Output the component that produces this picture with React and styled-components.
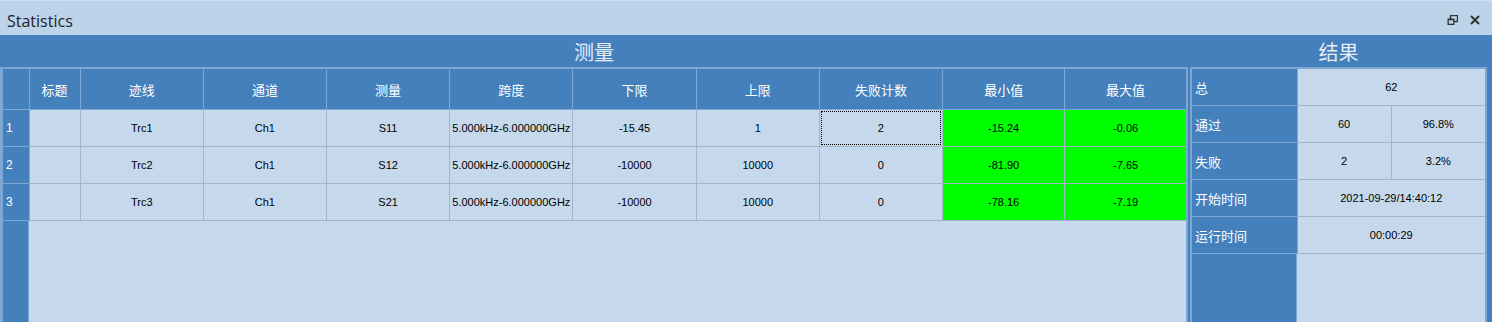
import React from "react";
import styled, { createGlobalStyle } from "styled-components";

const GlobalStyle = createGlobalStyle`
  html, body {
    margin: 0;
    padding: 0;
    overflow: hidden;
    background: #4380bc;
  }
`;

const BLUE = "#4380bc";
const LIGHT = "#c6d9ec";
const GRID = "#a2b6ca";
const EDGE = "#7ea7d3";
const CJK = `"Noto Sans CJK SC", "Liberation Sans", sans-serif`;

const Window = styled.div`
  width: 1492px;
  height: 322px;
  display: flex;
  flex-direction: column;
  font-family: "Liberation Sans", Arial, sans-serif;
`;

const TitleBar = styled.div`
  height: 34px;
  flex: none;
  background: #bdd3ea;
  border-top: 1px solid #cfdff0;
  display: flex;
  align-items: center;
  padding: 0 12px 0 7px;
`;

const Title = styled.div`
  flex: 1;
  font-family: "Open Sans", "Noto Sans", sans-serif;
  font-size: 16px;
  color: #222;
  margin-top: 5px;
`;

const TitleButtons = styled.div`
  display: flex;
  gap: 12px;
  align-items: center;
  margin-top: 4px;
`;

const Body = styled.div`
  flex: 1;
  min-height: 0;
  display: grid;
  grid-template-columns: 1188px 297px;
  column-gap: 2px;
  padding-right: 5px;
  background: ${BLUE};
`;

const Section = styled.div`
  display: flex;
  flex-direction: column;
  min-height: 0;
`;

const SectionTitle = styled.div`
  height: 31px;
  flex: none;
  display: flex;
  align-items: center;
  justify-content: center;
  font-family: ${CJK};
  font-size: 20px;
  color: #e3ecf7;
  padding-top: 1px;
`;

const Panel = styled.div`
  flex: 1;
  min-height: 0;
  display: flex;
  flex-direction: column;
  border-top: 2px solid ${EDGE};
  border-left: ${(p) => p.$left}px solid ${EDGE};
  border-right: 2px solid ${EDGE};
  background: ${LIGHT};
  overflow: hidden;
`;

const Table = styled.table`
  border-collapse: collapse;
  table-layout: fixed;
  width: 100%;
  flex: none;
`;

const HeadCell = styled.th`
  height: 40px;
  padding: 0;
  background: ${BLUE};
  color: #fff;
  font-family: ${CJK};
  font-size: 13px;
  font-weight: normal;
  text-align: center;
  border-right: 1px solid ${EDGE};
  border-bottom: 1px solid ${EDGE};
  &:last-child {
    border-right: none;
  }
`;

const RowNum = styled.td`
  padding: 0 0 0 3px;
  background: ${BLUE};
  color: #fff;
  font-size: 12px;
  text-align: left;
  border-right: 1px solid ${EDGE};
  border-bottom: 1px solid ${EDGE};
`;

const Cell = styled.td`
  height: 36px;
  padding: 0;
  background: ${(p) => (p.$ok ? "#00ff00" : LIGHT)};
  color: #000;
  font-size: 11px;
  text-align: center;
  border-right: 1px solid ${GRID};
  border-bottom: 1px solid ${GRID};
  &:last-child {
    border-right: none;
  }
`;

const Focus = styled.div`
  height: 34px;
  margin: 0 1px;
  border: 1px dotted #000;
  box-sizing: border-box;
  display: flex;
  align-items: center;
  justify-content: center;
`;

const Label = styled.td`
  height: 36px;
  padding: 0 0 0 3px;
  background: ${BLUE};
  color: #fff;
  font-family: ${CJK};
  font-size: 13px;
  border-right: 1px solid ${EDGE};
  border-bottom: 1px solid ${EDGE};
`;

const Rest = styled.div`
  flex: 1;
  display: flex;
`;

const RestHeader = styled.div`
  width: ${(p) => p.$w}px;
  flex: none;
  background: ${BLUE};
  border-right: 1px solid ${EDGE};
`;

const headers = ["标题", "迹线", "通道", "测量", "跨度", "下限", "上限", "失败计数", "最小值", "最大值"];
const widths = [26, 51, 123, 123, 123, 123, 123, 123, 123, 122, 121];

const rows = [
  ["", "Trc1", "Ch1", "S11", "5.000kHz-6.000000GHz", "-15.45", "1", "2", "-15.24", "-0.06"],
  ["", "Trc2", "Ch1", "S12", "5.000kHz-6.000000GHz", "-10000", "10000", "0", "-81.90", "-7.65"],
  ["", "Trc3", "Ch1", "S21", "5.000kHz-6.000000GHz", "-10000", "10000", "0", "-78.16", "-7.19"],
];

const RestoreIcon = () => (
  <svg width="11" height="11" viewBox="0 0 11 11">
    <rect x="3.5" y="0.5" width="7" height="6" fill="none" stroke="#333" strokeWidth="1.4" />
    <rect x="0.5" y="3.5" width="7" height="6.5" fill="#333" />
    <rect x="1.8" y="5.3" width="4.4" height="3.4" fill="#bdd3ea" />
  </svg>
);

const CloseIcon = () => (
  <svg width="10" height="10" viewBox="0 0 10 10">
    <path d="M1 1 L9 9 M9 1 L1 9" stroke="#333" strokeWidth="2" />
  </svg>
);

const Measurements = () => (
  <Panel $left={3}>
    <Table>
      <colgroup>
        {widths.map((w, i) => (
          <col key={i} style={{ width: w }} />
        ))}
      </colgroup>
      <thead>
        <tr>
          <HeadCell />
          {headers.map((h) => (
            <HeadCell key={h}>{h}</HeadCell>
          ))}
        </tr>
      </thead>
      <tbody>
        {rows.map((r, i) => (
          <tr key={i}>
            <RowNum>{i + 1}</RowNum>
            {r.map((v, j) => (
              <Cell key={j} $ok={j >= 8}>
                {i === 0 && j === 7 ? <Focus>{v}</Focus> : v}
              </Cell>
            ))}
          </tr>
        ))}
      </tbody>
    </Table>
    <Rest>
      <RestHeader $w={25} />
    </Rest>
  </Panel>
);

const Results = () => (
  <Panel $left={2}>
    <Table>
      <colgroup>
        <col style={{ width: 105 }} />
        <col style={{ width: 94 }} />
        <col />
      </colgroup>
      <tbody>
        <tr>
          <Label>总</Label>
          <Cell colSpan={2}>62</Cell>
        </tr>
        <tr>
          <Label>通过</Label>
          <Cell>60</Cell>
          <Cell>96.8%</Cell>
        </tr>
        <tr>
          <Label>失败</Label>
          <Cell>2</Cell>
          <Cell>3.2%</Cell>
        </tr>
        <tr>
          <Label>开始时间</Label>
          <Cell colSpan={2}>2021-09-29/14:40:12</Cell>
        </tr>
        <tr>
          <Label>运行时间</Label>
          <Cell colSpan={2}>00:00:29</Cell>
        </tr>
      </tbody>
    </Table>
    <Rest>
      <RestHeader $w={104} />
    </Rest>
  </Panel>
);

const App = () => (
  <>
    <GlobalStyle />
    <Window>
      <TitleBar>
        <Title>Statistics</Title>
        <TitleButtons>
          <RestoreIcon />
          <CloseIcon />
        </TitleButtons>
      </TitleBar>
      <Body>
        <Section>
          <SectionTitle>测量</SectionTitle>
          <Measurements />
        </Section>
        <Section>
          <SectionTitle>结果</SectionTitle>
          <Results />
        </Section>
      </Body>
    </Window>
  </>
);

export default App;
